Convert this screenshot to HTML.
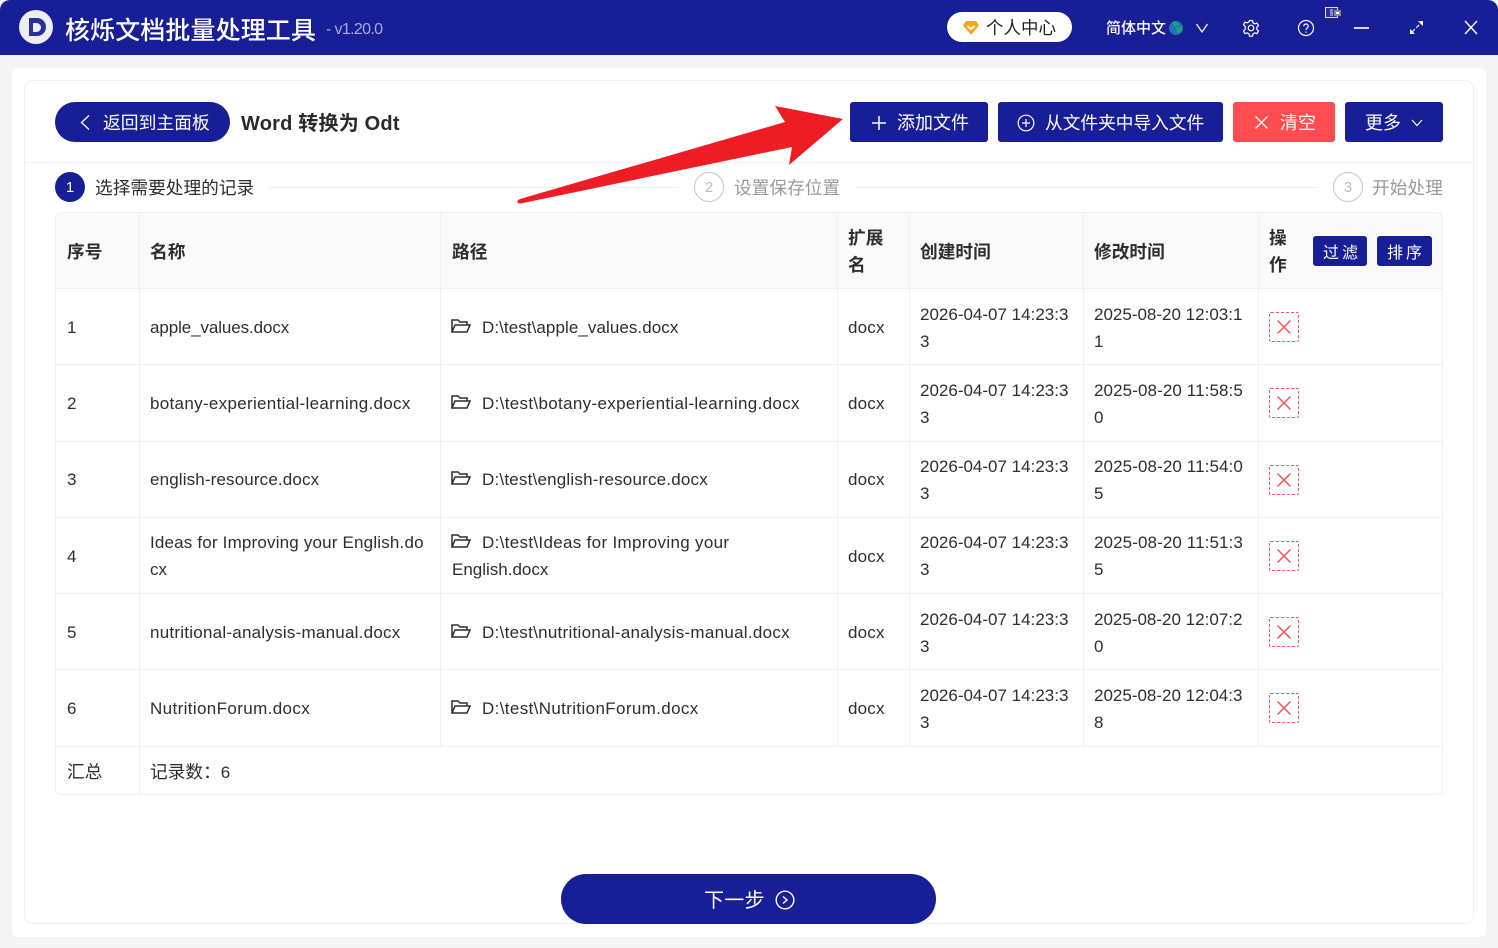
<!DOCTYPE html>
<html lang="zh-CN"><head><meta charset="utf-8"><title>核烁文档批量处理工具</title>
<style>
*{box-sizing:border-box}
html,body{margin:0;padding:0;width:1498px;height:948px;overflow:hidden;background:#f4f4f4}
body{position:relative;font-family:"Liberation Sans","Noto Sans CJK SC",sans-serif;color:#2e2e2e;font-size:17.7px}
div,span.a,svg{position:absolute}
.t{white-space:nowrap;height:28px;line-height:28px}
.c{font-family:"Noto Sans CJK SC",sans-serif}
.l{font-size:17px;letter-spacing:0;margin-top:1px}
.m{margin-top:1px}
.b{font-weight:700}
.h{background:#f0f0f0}
.btn{background:#171e96;border-radius:3px;height:40px;top:102px}
.w{color:#fff}
.dl{left:1269px;width:30px;height:30px;border:1px dashed #f9535b;border-radius:2px}
</style></head><body>
<div style="left:0;top:0;width:1498px;height:55px;background:#171e96;border-radius:10px 10px 0 0"></div>
<div style="left:19px;top:10px;width:34px;height:34px;border-radius:50%;background:#eeeef2"></div>
<svg style="left:19px;top:10px" width="34" height="34"><path d="M10 8h8a9 9 0 0 1 0 18h-8z" fill="#2a3099"/><path d="M14 13h3.500a4.500 4.500 0 0 1 0 9H14z" fill="#eeeef2"/></svg>
<div class="t c w" style="left:65px;top:15px;font-size:25px;font-weight:500;letter-spacing:.1px">核烁文档批量处理工具</div>
<div class="t m" style="left:326px;top:15px;font-size:16px;color:#a9acdc;letter-spacing:-.65px">- v1.20.0</div>
<div style="left:947px;top:12px;width:125px;height:30px;border-radius:15px;background:#fff"></div>
<svg style="left:962px;top:20px" width="18" height="16"><path d="M4 1h10l3 4.500L9 15 1 5.500z" fill="#f7a823"/><path d="M5.500 6L9 9l3.500-3" fill="none" stroke="#fff" stroke-width="1.800"/></svg>
<div class="t c" style="left:986px;top:14px;font-size:17.5px;color:#222">个人中心</div>
<div class="t c w" style="left:1106px;top:14px;font-size:15px;font-weight:500">简体中文</div>
<svg style="left:1169px;top:21px" width="14" height="14"><circle cx="7" cy="7" r="7" fill="#2a6fb8"/><path d="M3 1.500l3-1.500 3 2 1 2-4 2-1-2zM7 6.500l6-.5 0 3-2 3-3 0z" fill="#12a87a"/></svg>
<svg style="left:1195px;top:22px" width="14" height="12"><path d="M1.500 2L7 10l5.500-8" fill="none" stroke="#fff" stroke-width="1.200"/></svg>
<svg style="left:1242px;top:19px" width="18" height="18" fill="none" stroke="#fff" stroke-width="1.200"><path d="M7.500 1.500h3l.5 2.300 1.800 1 2.200-.7 1.500 2.600-1.700 1.600v2.100l1.700 1.600-1.500 2.600-2.200-.7-1.800 1-.5 2.300h-3l-.5-2.300-1.800-1-2.200.7-1.500-2.600 1.700-1.600V7.300L1.500 5.700 3 3.100l2.200.7 1.800-1z"/><circle cx="9" cy="9" r="2.800"/></svg>
<svg style="left:1297px;top:19px" width="18" height="18" fill="none" stroke="#fff" stroke-width="1.200"><circle cx="9" cy="9" r="7.500"/><path d="M6.800 7.200a2.200 2.200 0 1 1 3.400 1.800c-.8.500-1.200.9-1.200 2"/><path d="M9 12.500v1.300"/></svg>
<svg style="left:1325px;top:7px" width="16" height="11"><rect x=".5" y=".5" width="12" height="10" fill="#2a3098" stroke="#ddd"/><rect x="5" y="2" width="3" height="7" fill="#7f86c8"/><rect x="9" y="3" width="7" height="6" fill="#888"/><rect x="11" y="5" width="3" height="2" fill="#fff"/></svg>
<div style="left:1354px;top:27px;width:15px;height:1.500px;background:#d8d8ee"></div>
<svg style="left:1409px;top:20px" width="15" height="15"><path d="M3 12L12 3" stroke="#fff" stroke-width="1.200" stroke-dasharray="4 2"/><path d="M9 1h5v5zM1 9v5h5z" fill="#fff"/></svg>
<svg style="left:1464px;top:20px" width="14" height="15"><path d="M1 1l12 13M13 1L1 14" stroke="#fff" stroke-width="1.400"/></svg>

<div style="left:12px;top:68px;width:1474px;height:869px;background:#fff;border-radius:6px"></div>
<div style="left:24px;top:80px;width:1450px;height:844px;border:1px solid #f0f0f0;border-radius:9px"></div>
<div class="h" style="left:25px;top:162px;width:1448px;height:1px"></div>

<div style="left:55px;top:102px;width:175px;height:40px;border-radius:20px;background:#171e96"></div>
<svg style="left:78px;top:114px" width="14" height="17"><path d="M11 1.500L3.500 8.500 11 15.500" fill="none" stroke="#fff" stroke-width="1.300"/></svg>
<div class="t c w" style="left:103px;top:108px;font-size:17.8px">返回到主面板</div>
<div class="t b" style="left:241px;top:108px;font-size:20px;color:#2a2a2a;letter-spacing:.2px">Word <span class="c">转换为</span> Odt</div>

<div class="btn" style="left:850px;width:138px"></div>
<svg style="left:871px;top:115px" width="16" height="16"><path d="M8 1v14M1 8h14" stroke="#fff" stroke-width="1.500"/></svg>
<div class="t c w" style="left:897px;top:108px;font-size:18px">添加文件</div>
<div class="btn" style="left:998px;width:225px"></div>
<svg style="left:1017px;top:114px" width="18" height="18" fill="none" stroke="#fff" stroke-width="1.200"><circle cx="9" cy="9" r="7.800"/><path d="M9 5v8M5 9h8"/></svg>
<div class="t c w" style="left:1045px;top:108px">从文件夹中导入文件</div>
<div class="btn" style="left:1233px;width:102px;background:#ff4d52"></div>
<svg style="left:1254px;top:115px" width="15" height="15"><path d="M1.500 1.500l12 12M13.500 1.500l-12 12" stroke="#fff" stroke-width="1.300"/></svg>
<div class="t c w" style="left:1280px;top:108px;font-size:18px">清空</div>
<div class="btn" style="left:1345px;width:98px"></div>
<div class="t c w" style="left:1365px;top:108px;font-size:18px">更多</div>
<svg style="left:1411px;top:118px" width="12" height="10"><path d="M1 2l5 5.500L11 2" fill="none" stroke="#fff" stroke-width="1.200"/></svg>

<div style="left:55px;top:172px;width:30px;height:30px;border-radius:50%;background:#171e96"></div>
<div class="t w m" style="left:55px;top:173px;width:30px;text-align:center;font-size:15px">1</div>
<div class="t c" style="left:95px;top:173px">选择需要处理的记录</div>
<div class="h" style="left:269px;top:187px;width:410px;height:1px"></div>
<div style="left:694px;top:172px;width:30px;height:30px;border-radius:50%;border:1px solid #c4c4d4"></div>
<div class="t m" style="left:694px;top:173px;width:30px;text-align:center;font-size:15px;color:#bbb">2</div>
<div class="t c" style="left:734px;top:173px;color:#999">设置保存位置</div>
<div class="h" style="left:855px;top:187px;width:463px;height:1px"></div>
<div style="left:1333px;top:172px;width:30px;height:30px;border-radius:50%;border:1px solid #c4c4d4"></div>
<div class="t m" style="left:1333px;top:173px;width:30px;text-align:center;font-size:15px;color:#bbb">3</div>
<div class="t c" style="left:1372px;top:173px;color:#999">开始处理</div>

<svg style="left:0;top:0" width="1498" height="240"><path d="M843 119L775 106 785 122 520 199Q516 201 518 203Q520 204 523 203L792 147 789 165z" fill="#ee1c25"/></svg>

<!-- table -->
<div style="left:56px;top:213px;width:1386px;height:75px;background:#fafafa"></div>
<div style="left:55px;top:212px;width:1388px;height:583px;border:1px solid #f0f0f0;border-radius:6px"></div>
<div class="h" style="left:55px;top:288px;width:1388px;height:1px"></div>
<div class="h" style="left:55px;top:364px;width:1388px;height:1px"></div>
<div class="h" style="left:55px;top:441px;width:1388px;height:1px"></div>
<div class="h" style="left:55px;top:517px;width:1388px;height:1px"></div>
<div class="h" style="left:55px;top:593px;width:1388px;height:1px"></div>
<div class="h" style="left:55px;top:669px;width:1388px;height:1px"></div>
<div class="h" style="left:55px;top:746px;width:1388px;height:1px"></div>
<div class="h" style="left:139px;top:212px;width:1px;height:582px"></div>
<div class="h" style="left:440px;top:212px;width:1px;height:534px"></div>
<div class="h" style="left:837px;top:212px;width:1px;height:534px"></div>
<div class="h" style="left:909px;top:212px;width:1px;height:534px"></div>
<div class="h" style="left:1083px;top:212px;width:1px;height:534px"></div>
<div class="h" style="left:1258px;top:212px;width:1px;height:534px"></div>

<div class="t c b" style="left:67px;top:237px">序号</div>
<div class="t c b" style="left:150px;top:237px">名称</div>
<div class="t c b" style="left:452px;top:237px">路径</div>
<div class="t c b" style="left:848px;top:223px">扩展</div>
<div class="t c b" style="left:848px;top:250px">名</div>
<div class="t c b" style="left:920px;top:237px">创建时间</div>
<div class="t c b" style="left:1094px;top:237px">修改时间</div>
<div class="t c b" style="left:1269px;top:223px">操</div>
<div class="t c b" style="left:1269px;top:250px">作</div>
<div style="left:1313px;top:236px;width:54px;height:30px;background:#171e96;border-radius:3px"></div>
<div class="t c w" style="left:1323px;top:237px;font-size:16px;letter-spacing:3px">过滤</div>
<div style="left:1377px;top:236px;width:55px;height:30px;background:#171e96;border-radius:3px"></div>
<div class="t c w" style="left:1387px;top:237px;font-size:16px;letter-spacing:3px">排序</div>

<!-- row 1 -->
<div class="t l" style="left:67px;top:313px">1</div>
<div class="t l" style="left:150px;top:313px;letter-spacing:-.1px">apple_values.docx</div>
<svg style="left:451px;top:318px" width="20" height="16" fill="none" stroke="#2e2e2e" stroke-width="1.500"><path d="M1 14V2h6l2 2h7v3M1 14h15l3-7H4z"/></svg>
<div class="t l" style="left:482px;top:313px;letter-spacing:.07px">D:\test\apple_values.docx</div>
<div class="t l" style="left:848px;top:313px;letter-spacing:.2px">docx</div>
<div class="t l" style="left:920px;top:300px">2026-04-07 14:23:3</div>
<div class="t l" style="left:920px;top:327px">3</div>
<div class="t l" style="left:1094px;top:300px">2025-08-20 12:03:1</div>
<div class="t l" style="left:1094px;top:327px">1</div>
<div class="dl" style="top:312px"></div>
<svg style="left:1277px;top:320px" width="14" height="14"><path d="M.5.500l13 13M13.500.500l-13 13" stroke="#f9535b" stroke-width="1.500"/></svg>
<!-- row 2 -->
<div class="t l" style="left:67px;top:389px">2</div>
<div class="t l" style="left:150px;top:389px;letter-spacing:.31px">botany-experiential-learning.docx</div>
<svg style="left:451px;top:394px" width="20" height="16" fill="none" stroke="#2e2e2e" stroke-width="1.500"><path d="M1 14V2h6l2 2h7v3M1 14h15l3-7H4z"/></svg>
<div class="t l" style="left:482px;top:389px;letter-spacing:.33px">D:\test\botany-experiential-learning.docx</div>
<div class="t l" style="left:848px;top:389px;letter-spacing:.2px">docx</div>
<div class="t l" style="left:920px;top:376px">2026-04-07 14:23:3</div>
<div class="t l" style="left:920px;top:403px">3</div>
<div class="t l" style="left:1094px;top:376px;letter-spacing:.1px">2025-08-20 11:58:5</div>
<div class="t l" style="left:1094px;top:403px">0</div>
<div class="dl" style="top:388px"></div>
<svg style="left:1277px;top:396px" width="14" height="14"><path d="M.5.500l13 13M13.500.500l-13 13" stroke="#f9535b" stroke-width="1.500"/></svg>
<!-- row 3 -->
<div class="t l" style="left:67px;top:465px">3</div>
<div class="t l" style="left:150px;top:465px;letter-spacing:.14px">english-resource.docx</div>
<svg style="left:451px;top:470px" width="20" height="16" fill="none" stroke="#2e2e2e" stroke-width="1.500"><path d="M1 14V2h6l2 2h7v3M1 14h15l3-7H4z"/></svg>
<div class="t l" style="left:482px;top:465px;letter-spacing:.2px">D:\test\english-resource.docx</div>
<div class="t l" style="left:848px;top:465px;letter-spacing:.2px">docx</div>
<div class="t l" style="left:920px;top:452px">2026-04-07 14:23:3</div>
<div class="t l" style="left:920px;top:479px">3</div>
<div class="t l" style="left:1094px;top:452px;letter-spacing:.1px">2025-08-20 11:54:0</div>
<div class="t l" style="left:1094px;top:479px">5</div>
<div class="dl" style="top:465px"></div>
<svg style="left:1277px;top:473px" width="14" height="14"><path d="M.5.500l13 13M13.500.500l-13 13" stroke="#f9535b" stroke-width="1.500"/></svg>
<!-- row 4 -->
<div class="t l" style="left:67px;top:542px">4</div>
<div class="t l" style="left:150px;top:528px;letter-spacing:.18px">Ideas for Improving your English.do</div>
<div class="t l" style="left:150px;top:555px">cx</div>
<svg style="left:451px;top:533px" width="20" height="16" fill="none" stroke="#2e2e2e" stroke-width="1.500"><path d="M1 14V2h6l2 2h7v3M1 14h15l3-7H4z"/></svg>
<div class="t l" style="left:482px;top:528px;letter-spacing:.32px">D:\test\Ideas for Improving your</div>
<div class="t l" style="left:452px;top:555px">English.docx</div>
<div class="t l" style="left:848px;top:542px;letter-spacing:.2px">docx</div>
<div class="t l" style="left:920px;top:528px">2026-04-07 14:23:3</div>
<div class="t l" style="left:920px;top:555px">3</div>
<div class="t l" style="left:1094px;top:528px;letter-spacing:.1px">2025-08-20 11:51:3</div>
<div class="t l" style="left:1094px;top:555px">5</div>
<div class="dl" style="top:541px"></div>
<svg style="left:1277px;top:549px" width="14" height="14"><path d="M.5.500l13 13M13.500.500l-13 13" stroke="#f9535b" stroke-width="1.500"/></svg>
<!-- row 5 -->
<div class="t l" style="left:67px;top:618px">5</div>
<div class="t l" style="left:150px;top:618px;letter-spacing:.24px">nutritional-analysis-manual.docx</div>
<svg style="left:451px;top:623px" width="20" height="16" fill="none" stroke="#2e2e2e" stroke-width="1.500"><path d="M1 14V2h6l2 2h7v3M1 14h15l3-7H4z"/></svg>
<div class="t l" style="left:482px;top:618px;letter-spacing:.28px">D:\test\nutritional-analysis-manual.docx</div>
<div class="t l" style="left:848px;top:618px;letter-spacing:.2px">docx</div>
<div class="t l" style="left:920px;top:605px">2026-04-07 14:23:3</div>
<div class="t l" style="left:920px;top:632px">3</div>
<div class="t l" style="left:1094px;top:605px">2025-08-20 12:07:2</div>
<div class="t l" style="left:1094px;top:632px">0</div>
<div class="dl" style="top:617px"></div>
<svg style="left:1277px;top:625px" width="14" height="14"><path d="M.5.500l13 13M13.500.500l-13 13" stroke="#f9535b" stroke-width="1.500"/></svg>
<!-- row 6 -->
<div class="t l" style="left:67px;top:694px">6</div>
<div class="t l" style="left:150px;top:694px;letter-spacing:.37px">NutritionForum.docx</div>
<svg style="left:451px;top:699px" width="20" height="16" fill="none" stroke="#2e2e2e" stroke-width="1.500"><path d="M1 14V2h6l2 2h7v3M1 14h15l3-7H4z"/></svg>
<div class="t l" style="left:482px;top:694px;letter-spacing:.36px">D:\test\NutritionForum.docx</div>
<div class="t l" style="left:848px;top:694px;letter-spacing:.2px">docx</div>
<div class="t l" style="left:920px;top:681px">2026-04-07 14:23:3</div>
<div class="t l" style="left:920px;top:708px">3</div>
<div class="t l" style="left:1094px;top:681px">2025-08-20 12:04:3</div>
<div class="t l" style="left:1094px;top:708px">8</div>
<div class="dl" style="top:693px"></div>
<svg style="left:1277px;top:701px" width="14" height="14"><path d="M.5.500l13 13M13.500.500l-13 13" stroke="#f9535b" stroke-width="1.500"/></svg>
<!-- summary -->
<div class="t c" style="left:67px;top:757px">汇总</div>
<div class="t c" style="left:150px;top:757px">记录数：<span style="font-family:'Liberation Sans',sans-serif;font-size:17px">6</span></div>

<div style="left:561px;top:874px;width:375px;height:50px;border-radius:25px;background:#171e96"></div>
<div class="t c w" style="left:704px;top:885px;font-size:20px;letter-spacing:.3px">下一步</div>
<svg style="left:775px;top:890px" width="20" height="20" fill="none" stroke="#fff" stroke-width="1.400"><circle cx="10" cy="10" r="8.800"/><path d="M8 6.500l4 3.500-4 3.500"/></svg>
</body></html>
